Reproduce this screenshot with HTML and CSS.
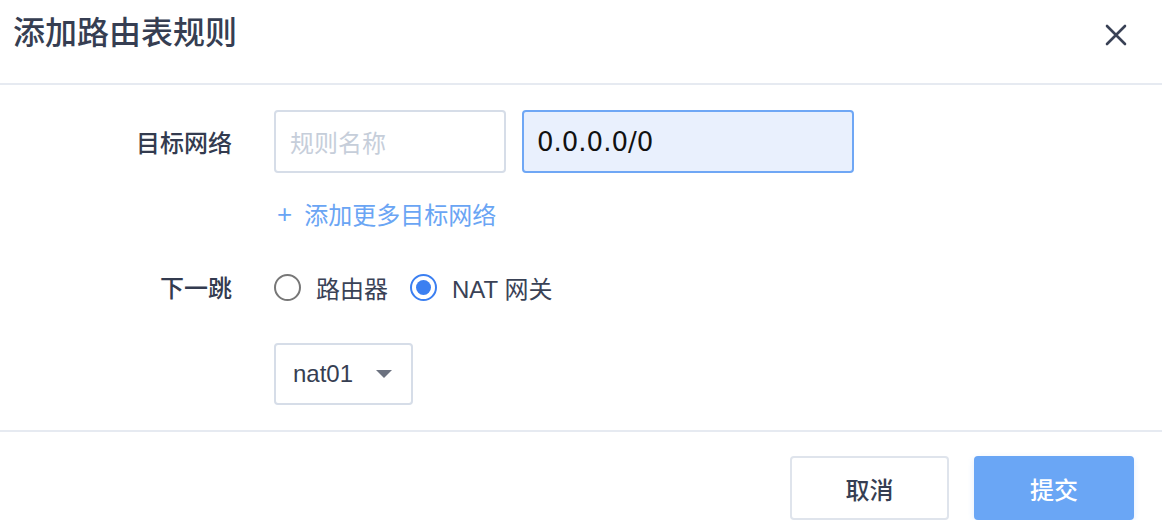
FILE: index.html
```html
<!DOCTYPE html>
<html lang="zh-CN">
<head>
<meta charset="utf-8">
<title>添加路由表规则</title>
<link rel="stylesheet" href="styles.css">
</head>
<body>
<div class="dialog">
  <div class="header">
    <div class="title">添加路由表规则</div>
    <button class="close" aria-label="关闭">
      <svg width="22" height="22" viewBox="0 0 22 22"><path d="M2 2 L20 20 M20 2 L2 20" stroke="#394155" stroke-width="2.6" stroke-linecap="round" fill="none"/></svg>
    </button>
  </div>
  <div class="body">
    <div class="row">
      <div class="label">目标网络</div>
      <div class="field">
        <div class="inputs">
          <div class="input name"><span class="placeholder">规则名称</span></div>
          <div class="input cidr"><span class="value">0.0.0.0/0</span></div>
        </div>
        <div class="add-more"><span class="plus">+</span><span>添加更多目标网络</span></div>
      </div>
    </div>
    <div class="row radio-row">
      <div class="label">下一跳</div>
      <div class="field radios">
        <label class="radio"><span class="dot"></span><span class="rtext">路由器</span></label>
        <label class="radio checked"><span class="dot"></span><span class="rtext">NAT 网关</span></label>
      </div>
    </div>
    <div class="row select-row">
      <div class="label"></div>
      <div class="field">
        <div class="select"><span class="sval">nat01</span><span class="caret"></span></div>
      </div>
    </div>
  </div>
  <div class="footer">
    <button class="btn cancel">取消</button>
    <button class="btn submit">提交</button>
  </div>
</div>
</body>
</html>
```

FILE: styles.css
```css
* { box-sizing: border-box; }
html, body { margin: 0; padding: 0; background: #fff; }
body {
  font-family: "Liberation Sans", "Noto Sans CJK SC", sans-serif;
  color: #363e52;
}
.dialog { width: 1162px; }
.header {
  height: 85px;
  border-bottom: 2px solid #e6eaf1;
  display: flex;
  justify-content: space-between;
  align-items: flex-start;
  padding: 8px 35px 0 13px;
}
.title {
  font-family: "Noto Sans CJK SC", sans-serif;
  font-size: 32px;
  line-height: 44px;
  font-weight: 500;
  color: #363e52;
}
.close {
  border: 0;
  background: none;
  padding: 0;
  margin-top: 16px;
  width: 22px;
  height: 22px;
  display: flex;
}
.body { padding: 25px 0 25px 0; }
.row { display: grid; grid-template-columns: 232px auto; column-gap: 42px; }
.label {
  font-family: "Noto Sans CJK SC", sans-serif;
  font-size: 24px;
  font-weight: 500;
  color: #333b4f;
  text-align: right;
  line-height: 63px;
}
.inputs { display: flex; gap: 16px; }
.input {
  height: 63px;
  border: 2px solid #d6dde8;
  border-radius: 4px;
  display: flex;
  align-items: center;
}
.input.name { width: 232px; padding-left: 14px; }
.input.cidr {
  width: 332px;
  padding-left: 13px;
  background: #e9f0fd;
  border-color: #6fa7f5;
}
.placeholder {
  font-family: "Noto Sans CJK SC", sans-serif;
  font-size: 24px;
  color: #c6ceda;
}
.value {
  font-family: "DejaVu Sans", sans-serif;
  font-size: 26px;
  color: #111;
}
.add-more {
  margin-top: 24px;
  font-family: "Noto Sans CJK SC", sans-serif;
  font-size: 24px;
  line-height: 34px;
  color: #6aa5f4;
  display: flex;
  padding-left: 3px;
}
.add-more .plus {
  font-family: "Liberation Sans", sans-serif;
  font-size: 26px;
  margin-right: 12px;
}
.radio-row { margin-top: 39px; }
.radio-row .label { line-height: 34px; }
.radios { display: flex; align-items: center; height: 34px; }
.radio { display: flex; align-items: center; }
.radio + .radio { margin-left: 22px; }
.dot {
  width: 27px;
  height: 27px;
  border: 2px solid #777;
  border-radius: 50%;
  display: flex;
  align-items: center;
  justify-content: center;
}
.radio.checked .dot { border-color: #3b7ff1; }
.radio.checked .dot::after {
  content: "";
  width: 15px;
  height: 15px;
  border-radius: 50%;
  background: #3b7ff1;
}
.rtext {
  margin-left: 15px;
  font-size: 24px;
  color: #3a4256;
}
.select-row { margin-top: 39px; }
.select {
  width: 139px;
  height: 62px;
  border: 2px solid #d6dde8;
  border-radius: 4px;
  display: flex;
  align-items: center;
  padding-left: 17px;
}
.sval { font-size: 24px; color: #363e52; }
.caret {
  margin-left: 23px;
  width: 0;
  height: 0;
  border-left: 8px solid transparent;
  border-right: 8px solid transparent;
  border-top: 8px solid #6c7280;
}
.footer {
  border-top: 2px solid #e6eaf1;
  display: flex;
  justify-content: flex-end;
  gap: 25px;
  padding: 24px 28px 0 0;
}
.btn {
  font-family: "Noto Sans CJK SC", sans-serif;
  font-size: 24px;
  font-weight: 500;
  height: 64px;
  border-radius: 4px;
}
.cancel {
  width: 159px;
  border: 2px solid #dfe4ec;
  background: #fff;
  color: #363e52;
}
.submit {
  width: 160px;
  border: 0;
  background: #6aa6f5;
  color: #fff;
  box-shadow: 0 2px 6px rgba(106, 166, 245, 0.2);
}
```
